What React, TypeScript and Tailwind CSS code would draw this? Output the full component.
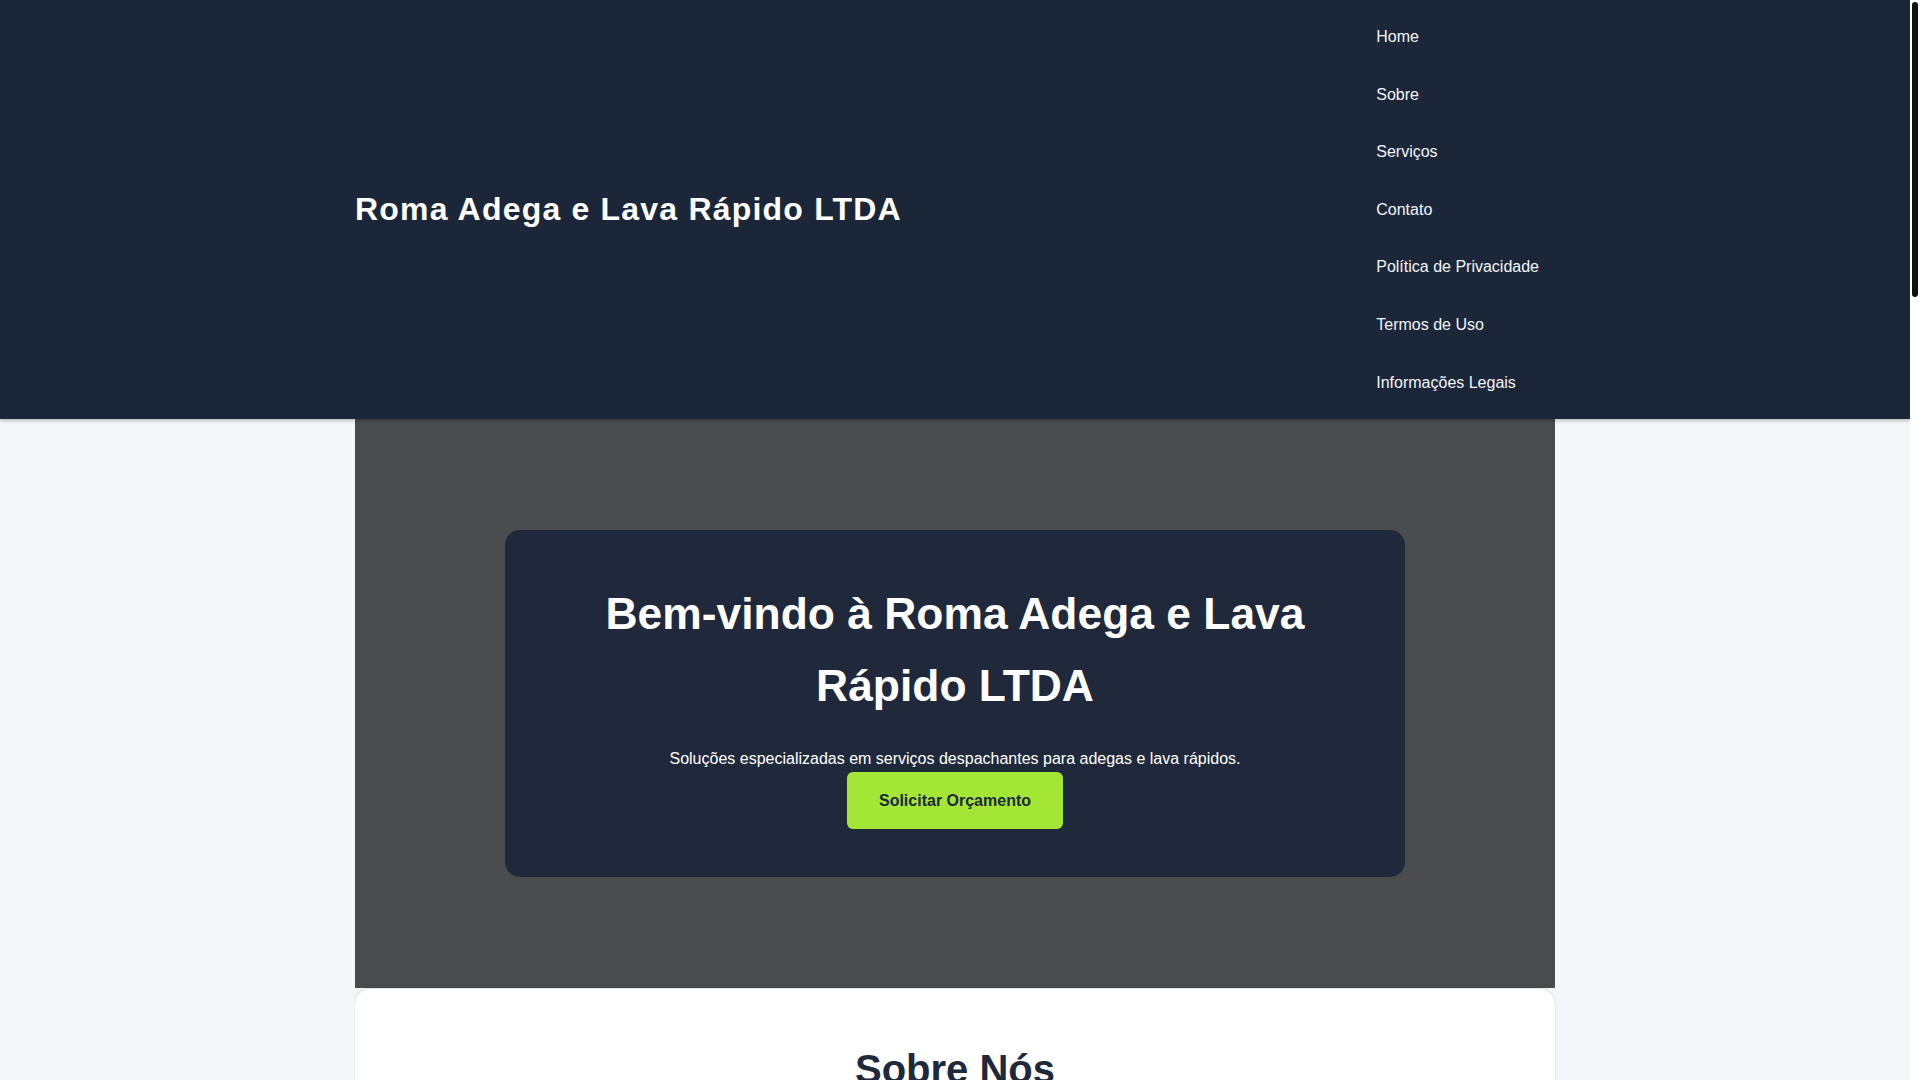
import React from "react";

const navItems = [
  "Home",
  "Sobre",
  "Serviços",
  "Contato",
  "Política de Privacidade",
  "Termos de Uso",
  "Informações Legais",
];

export default function App() {
  return (
    <div
      className="min-h-screen bg-[#f4f7fa] text-[#1e293b]"
      style={{ fontFamily: '"Liberation Sans", Arial, sans-serif' }}
    >
      <div className="mr-[10px]">
        <header className="relative z-10 w-full bg-[#1c2639] shadow-[0_2px_3px_rgba(0,0,0,0.22)]">
          <div className="mx-auto flex max-w-[1200px] items-center justify-between py-2">
            <h1 className="text-[32px] font-bold leading-[1.6] tracking-[1.2px] text-white">
              Roma Adega e Lava Rápido LTDA
            </h1>
            <nav>
              <ul className="flex flex-col">
                {navItems.map((item) => (
                  <li key={item} className="flex h-[57.6px] items-center">
                    <a href="#" className="pl-[15px] pr-4 text-[16px] leading-[1.6] text-[#f1f5f9]">
                      {item}
                    </a>
                  </li>
                ))}
              </ul>
            </nav>
          </div>
        </header>

        <main className="mx-auto max-w-[1200px]">
          <section className="flex justify-center bg-[#4a4b4d] py-[111px]">
            <div className="w-[900px] rounded-[15px] bg-[#1f293b] p-12 text-center text-white">
              <h2 className="mb-6 text-[44.4px] font-bold leading-[72px]">
                Bem-vindo à Roma Adega e Lava Rápido LTDA
              </h2>
              <p className="text-[16px] leading-[1.6]">
                Soluções especializadas em serviços despachantes para adegas e lava rápidos.
              </p>
              <a
                href="#"
                className="inline-block rounded-[6px] bg-[#a3e635] px-8 py-4 text-[16px] font-bold leading-[1.6] text-[#1e293b]"
              >
                Solicitar Orçamento
              </a>
            </div>
          </section>

          <section className="relative mt-[1px] rounded-[15px] bg-white px-12 pb-12 pt-[48px] text-center shadow-[0_-1px_2px_rgba(0,0,0,0.12)]">
            <h2 className="mb-6 text-[40px] font-bold leading-[1.6] text-[#1e293b]">Sobre Nós</h2>
            <p className="mx-auto max-w-[800px] text-[16px] leading-[1.6] text-[#334155]">
              A Roma Adega e Lava Rápido LTDA é especializada em serviços despachantes para adegas e
              lava rápidos, oferecendo suporte completo na regularização, licenciamento e documentação
              do seu negócio.
            </p>
          </section>

          <section className="mt-8 rounded-[15px] bg-white p-12 text-center">
            <h2 className="mb-6 text-[40px] font-bold leading-[1.6]">Serviços</h2>
            <div className="grid grid-cols-3 gap-6 text-left">
              {["Licenciamento", "Regularização", "Documentação"].map((s) => (
                <div key={s} className="rounded-[10px] bg-[#f4f7fa] p-6">
                  <h3 className="mb-2 text-[20px] font-bold">{s}</h3>
                  <p className="text-[16px] leading-[1.6] text-[#334155]">
                    Atendimento ágil e especializado para o seu estabelecimento.
                  </p>
                </div>
              ))}
            </div>
          </section>

          <section className="mt-8 rounded-[15px] bg-white p-12 text-center">
            <h2 className="mb-6 text-[40px] font-bold leading-[1.6]">Contato</h2>
            <p className="text-[16px] leading-[1.6] text-[#334155]">
              Entre em contato para solicitar um orçamento.
            </p>
          </section>
        </main>

        <footer className="mt-8 bg-[#1c2639] py-8 text-center text-[14px] text-[#f1f5f9]">
          © Roma Adega e Lava Rápido LTDA. Todos os direitos reservados.
        </footer>
      </div>

      <div className="fixed right-0 top-0 z-50 h-screen w-[10px] bg-white">
        <div className="absolute left-[2px] top-[2px] h-[295px] w-[6px] rounded-full bg-[#111111]" />
      </div>
    </div>
  );
}
